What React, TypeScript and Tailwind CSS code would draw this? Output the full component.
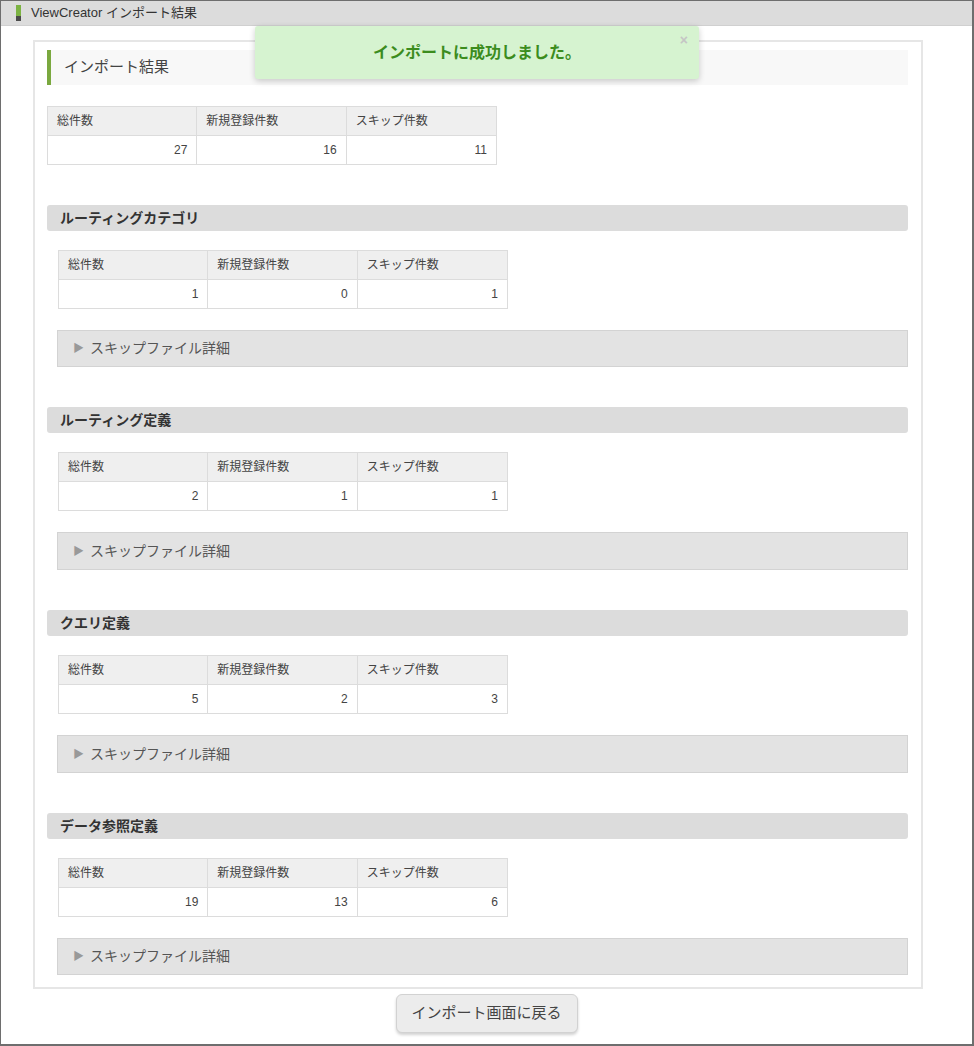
import React from "react";

const font = { fontFamily: '"Liberation Sans", "Noto Sans CJK JP", sans-serif' };

function CountTable({ values, indent }: { values: [string, string, string]; indent?: boolean }) {
  const heads = ["総件数", "新規登録件数", "スキップ件数"];
  return (
    <div className={`flex flex-col w-[450px] border border-[#dcdcdc] text-[12px] text-[#444] ${indent ? "ml-[11px]" : ""}`}>
      <div className="flex h-[29px] bg-[#efefef] border-b border-[#dcdcdc]">
        {heads.map((h, i) => (
          <div key={h} className={`w-[150px] flex items-center pl-[9px] ${i < 2 ? "border-r border-[#dcdcdc]" : ""}`}>
            {h}
          </div>
        ))}
      </div>
      <div className="flex h-[28px] bg-white">
        {values.map((v, i) => (
          <div key={i} className={`w-[150px] flex items-center justify-end pr-[9px] ${i < 2 ? "border-r border-[#dcdcdc]" : ""}`}>
            {v}
          </div>
        ))}
      </div>
    </div>
  );
}

function Section({ title, values, last, tall }: { title: string; values: [string, string, string]; last?: boolean; tall?: boolean }) {
  return (
    <div className={`flex flex-col ${last ? "" : "mb-[40px]"}`}>
      <div className="h-[26px] bg-[#dcdcdc] rounded-[3px] flex items-center pl-[13px] text-[14px] font-bold text-[#333]">
        {title}
      </div>
      <div className="mt-[19px]">
        <CountTable values={values} indent />
      </div>
      <div className={`mt-[21px] ml-[10px] ${tall ? "h-[38px]" : "h-[37px]"} bg-[#e3e3e3] border border-[#d3d3d3] flex items-center pl-[15px] text-[14px] text-[#555]`}>
        <span className="text-[#999] text-[11px] mr-[6px]">▶</span>
        スキップファイル詳細
      </div>
    </div>
  );
}

export default function App() {
  return (
    <div style={font} className="w-[974px] h-[1046px] relative bg-white border-t border-l border-r-2 border-b-2 border-[#6e6e6e] overflow-hidden">
      <div className="h-[25px] bg-[#dcdcdc] border-b border-[#d0d0d0] flex items-center pl-[15px]">
        <div className="flex flex-col w-[5px] h-[16px] mr-[10px]">
          <div className="h-[11px] bg-[#7cb342]" />
          <div className="h-[5px] bg-[#4a4a4a]" />
        </div>
        <span className="text-[13px] text-[#333]">ViewCreator インポート結果</span>
      </div>

      <div className="ml-[32px] mt-[14px] w-[890px] border-2 border-[#e6e6e6] pt-[8px] pl-[12px] pr-[13px] pb-[12px] flex flex-col">
        <div className="h-[35px] bg-[#f8f8f8] border-l-[4px] border-[#7aa83f] flex items-center pl-[13px] text-[15px] text-[#444]">
          インポート結果
        </div>
        <div className="mt-[21px] mb-[40px]">
          <CountTable values={["27", "16", "11"]} />
        </div>
        <Section title="ルーティングカテゴリ" values={["1", "0", "1"]} />
        <Section title="ルーティング定義" values={["2", "1", "1"]} tall />
        <Section title="クエリ定義" values={["5", "2", "3"]} tall />
        <Section title="データ参照定義" values={["19", "13", "6"]} last />
      </div>

      <div className="flex justify-center mt-[5px]">
        <button className="w-[182px] h-[39px] rounded-[6px] bg-[#ececec] border border-[#d2d2d2] shadow-[0_2px_3px_rgba(0,0,0,0.18)] text-[15px] text-[#444]">
          インポート画面に戻る
        </button>
      </div>

      <div className="absolute left-[254px] top-[25px] w-[444px] h-[53px] bg-[#d6f3d0] rounded-[3px] shadow-[0_2px_6px_rgba(0,0,0,0.2)] flex items-center justify-center">
        <span className="text-[16px] font-bold text-[#3c8c1e]">インポートに成功しました。</span>
        <span className="absolute right-[11px] top-[4px] text-[14px] text-[#c5c5c5] font-bold">×</span>
      </div>
    </div>
  );
}
